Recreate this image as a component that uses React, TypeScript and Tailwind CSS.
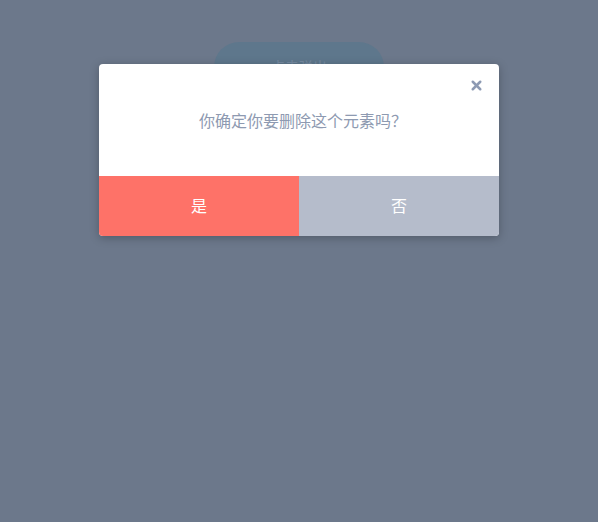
import { X } from "lucide-react";

export default function App() {
  return (
    <div
      className="relative w-full min-h-screen bg-[#6c788b] pt-[42px]"
      style={{ fontFamily: '"Liberation Sans", "Noto Sans CJK SC", sans-serif' }}
    >
      {/* trigger button behind the overlay */}
      <button className="mx-auto flex h-[50px] w-[170px] items-center justify-center rounded-full bg-[#5e778c] text-[14px] text-[#7589a0]">
        点击弹出
      </button>

      {/* confirm dialog */}
      <div className="absolute left-[99px] top-[64px] w-[400px] overflow-hidden rounded-[4px] bg-white shadow-[0_2px_10px_rgba(0,0,0,0.25)]">
        <div className="relative flex h-[112px] items-center justify-center pl-[8px] pt-[3px]">
          <button className="absolute right-[15px] top-[14px] text-[#8d9ab3]">
            <X size={15} strokeWidth={4} />
          </button>
          <p className="text-[16px] text-[#8e9ab1]">你确定你要删除这个元素吗？</p>
        </div>
        <div className="flex h-[60px]">
          <button className="flex-1 bg-[#fe7268] pt-[2px] text-[16px] text-white">是</button>
          <button className="flex-1 bg-[#b5bccb] pt-[2px] text-[16px] text-white">否</button>
        </div>
      </div>
    </div>
  );
}
